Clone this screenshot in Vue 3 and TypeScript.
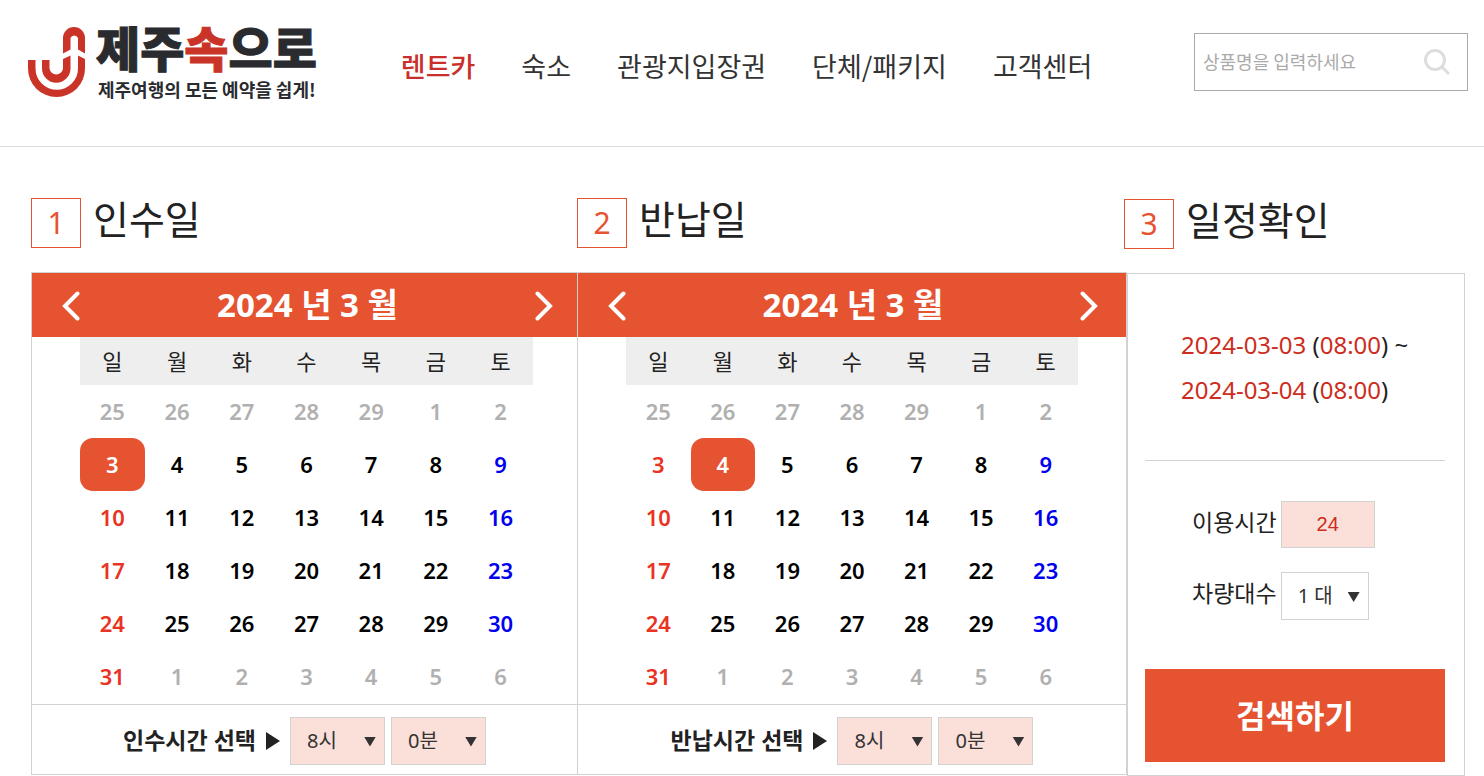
<script setup lang="ts">
import { ref } from 'vue'

interface Day {
  day: number
  closed: boolean
}

interface Calendar {
  step: number
  title: string
  timeLabel: string
  selected: number
}

const menu: string[] = ['렌트카', '숙소', '관광지입장권', '단체/패키지', '고객센터']
const weekdays: string[] = ['일', '월', '화', '수', '목', '금', '토']

const calendars = ref<Calendar[]>([
  { step: 1, title: '인수일', timeLabel: '인수시간 선택', selected: 3 },
  { step: 2, title: '반납일', timeLabel: '반납시간 선택', selected: 4 },
])

const hours = Array.from({ length: 13 }, (_, i) => i + 8)
const minutes = [0, 10, 20, 30, 40, 50]
const keyword = ref('')

// Days of neighbouring months and days before `firstOpen` cannot be booked.
function buildWeeks(year: number, month: number, firstOpen: number): Day[][] {
  const first = new Date(year, month - 1, 1)
  return Array.from({ length: 6 }, (_, week) =>
    Array.from({ length: 7 }, (_, weekday) => {
      const date = new Date(year, month - 1, 1 - first.getDay() + week * 7 + weekday)
      const day = date.getDate()
      return { day, closed: date.getMonth() !== month - 1 || day < firstOpen }
    }),
  )
}

const weeks = buildWeeks(2024, 3, 3)

function pick(calendar: Calendar, cell: Day) {
  if (!cell.closed) calendar.selected = cell.day
}
</script>

<template>
  <div class="page">
    <header class="header">
      <a class="logo" href="#">
        <svg class="mark" viewBox="28 27 57 70" aria-hidden="true">
          <path d="M63 53.5V38a11 11 0 0 1 22 0v15.500l-7-4V38a4 4 0 0 0-7.500 0v11.500z" />
          <path d="M28 60h7.500v8.500a21 21 0 0 0 42.500 0V55.500l7 3.500v9.500a28.500 28.500 0 0 1-57 0z" />
          <path d="M42 60h7.500v8.500a6.800 6.800 0 0 0 13.500 0V59l7.500-3.500v13a14.200 14.200 0 0 1-28.500 0z" />
        </svg>
        <span class="brand">
          <strong class="name">제주<em>속</em>으로</strong>
          <span class="slogan">제주여행의 모든 예약을 쉽게!</span>
        </span>
      </a>
      <nav class="menu">
        <a v-for="(item, i) in menu" :key="item" href="#" :class="{ active: i === 0 }">{{ item }}</a>
      </nav>
      <form class="search" @submit.prevent>
        <input v-model="keyword" type="text" placeholder="상품명을 입력하세요" aria-label="상품명" />
        <button type="submit" aria-label="검색">
          <svg viewBox="0 0 26 26" aria-hidden="true">
            <circle cx="11" cy="11" r="9.500" />
            <path d="M17.500 17.500L25 25" />
          </svg>
        </button>
      </form>
    </header>

    <main class="steps">
      <section v-for="cal in calendars" :key="cal.step" class="step">
        <h2 class="heading"><span class="number">{{ cal.step }}</span>{{ cal.title }}</h2>
        <div class="calendar">
          <div class="month">
            <button type="button" aria-label="이전 달">
              <svg viewBox="0 0 18 30" aria-hidden="true"><path d="M15.500 2.500L3 15l12.500 12.500" /></svg>
            </button>
            <strong>2024 년 3 월</strong>
            <button type="button" aria-label="다음 달">
              <svg viewBox="0 0 18 30" aria-hidden="true"><path d="M2.500 2.500L15 15L2.500 27.500" /></svg>
            </button>
          </div>
          <div class="days">
            <table>
              <thead>
                <tr><th v-for="name in weekdays" :key="name" scope="col">{{ name }}</th></tr>
              </thead>
              <tbody>
                <tr v-for="(week, w) in weeks" :key="w">
                  <td v-for="(cell, d) in week" :key="d">
                    <button
                      type="button"
                      :class="{
                        sunday: d === 0,
                        saturday: d === 6,
                        closed: cell.closed,
                        selected: !cell.closed && cell.day === cal.selected,
                      }"
                      @click="pick(cal, cell)"
                    >{{ cell.day }}</button>
                  </td>
                </tr>
              </tbody>
            </table>
          </div>
          <div class="time">
            <label :for="'hour' + cal.step">{{ cal.timeLabel }}</label>
            <svg class="pointer" viewBox="0 0 14 18" aria-hidden="true"><path d="M0 0l14 9l-14 9z" /></svg>
            <span class="select">
              <select :id="'hour' + cal.step">
                <option v-for="h in hours" :key="h">{{ h }}시</option>
              </select>
            </span>
            <span class="select">
              <select aria-label="분">
                <option v-for="m in minutes" :key="m">{{ m }}분</option>
              </select>
            </span>
          </div>
        </div>
      </section>

      <section class="step summary-step">
        <h2 class="heading"><span class="number">3</span>일정확인</h2>
        <div class="summary">
          <p class="period">
            <span><b>2024-03-03</b> (<b>08:00</b>) ~</span>
            <span><b>2024-03-04</b> (<b>08:00</b>)</span>
          </p>
          <div class="field">
            <label for="usage">이용시간</label>
            <input id="usage" type="text" value="24" readonly />
          </div>
          <div class="field">
            <label for="cars">차량대수</label>
            <span class="select plain">
              <select id="cars">
                <option v-for="n in 5" :key="n">{{ n }} 대</option>
              </select>
            </span>
          </div>
          <button type="button" class="submit">검색하기</button>
        </div>
      </section>
    </main>
  </div>
</template>

<style>
body {
  margin: 0;
  background: #fff;
}
</style>

<style scoped>
.page {
  --accent: #e55330;
  --line: #d2d2d2;
  color: #222;
  font-family: "Noto Sans", "Noto Sans CJK KR", sans-serif;
  overflow-x: hidden;
}

*,
*::before,
*::after {
  box-sizing: border-box;
}

button,
input,
select {
  margin: 0;
  padding: 0;
  border: 0;
  border-radius: 0;
  background: none;
  color: inherit;
  font: inherit;
}

button {
  cursor: pointer;
}

a {
  color: inherit;
  text-decoration: none;
}

.header {
  display: flex;
  align-items: flex-start;
  padding: 0 16px 0 28px;
  height: 147px;
  border-bottom: 1px solid #ddd;
  font-family: "Noto Sans CJK KR", sans-serif;
}

.logo {
  display: flex;
  gap: 11px;
  padding-top: 27px;
}

.mark {
  width: 57px;
  height: 70px;
  fill: #c93328;
}

.brand {
  display: flex;
  flex-direction: column;
  color: #2a2b2f;
  white-space: nowrap;
}

.name {
  font-size: 48px;
  font-weight: 900;
  line-height: 38px;
  -webkit-text-stroke: 1px currentColor;
}

.name em {
  color: #c93328;
  font-style: normal;
}

.slogan {
  padding-left: 2px;
  font-size: 18px;
  font-weight: 700;
  line-height: 48px;
}

.menu {
  display: flex;
  gap: 46px;
  padding: 46px 0 0 84px;
  color: #333;
  font-size: 27px;
  line-height: 40px;
  white-space: nowrap;
}

.menu .active {
  color: #c9302c;
  font-weight: 500;
}

.search {
  display: flex;
  align-items: center;
  width: 274px;
  height: 58px;
  margin: 33px 0 0 auto;
  padding: 0 17px 0 8px;
  border: 1px solid #aaa;
}

.search input {
  flex: 1;
  min-width: 0;
  padding-bottom: 2px;
  outline: 0;
  font-size: 18px;
  line-height: 54px;
}

.search input::placeholder {
  color: #aaa;
}

.search button {
  width: 26px;
  height: 26px;
}

.search svg {
  display: block;
  fill: none;
  stroke: #ddd;
  stroke-width: 3;
}

.steps {
  display: grid;
  grid-template-columns: 546fr 550fr 338fr;
  padding: 51px 19px 0 31px;
}

.heading {
  display: flex;
  gap: 12px;
  margin: 0 0 24px;
  font-size: 39px;
  font-weight: 400;
  line-height: 42px;
  white-space: nowrap;
}

.number {
  width: 50px;
  height: 50px;
  border: 1px solid var(--accent);
  color: var(--accent);
  font-size: 30px;
  line-height: 48px;
  text-align: center;
}

.calendar {
  border: 1px solid var(--line);
  border-right: 0;
}

.step:nth-child(2) .calendar {
  border-right: 1px solid var(--line);
}

.month {
  display: flex;
  align-items: center;
  justify-content: space-between;
  height: 64px;
  padding: 2px 24px 0 30px;
  background: var(--accent);
  color: #fff;
}

.step:nth-child(2) .month {
  padding-right: 28px;
}

.month strong {
  padding-bottom: 2px;
  font-size: 33px;
  line-height: 60px;
}

.month button {
  width: 18px;
  height: 30px;
}

.month svg {
  display: block;
  fill: none;
  stroke: #fff;
  stroke-width: 4;
  stroke-linecap: round;
}

.days {
  padding: 0 44px 0 48px;
  border-bottom: 1px solid var(--line);
}

.step:nth-child(2) .days {
  padding-right: 48px;
}

table {
  width: 100%;
  height: 367px;
  border-collapse: collapse;
  table-layout: fixed;
}

th,
td {
  padding: 0;
}

th {
  height: 48px;
  background: #eee;
  font-size: 22px;
  font-weight: 400;
  line-height: 48px;
}

td button {
  display: block;
  width: 100%;
  height: 53px;
  padding-bottom: 2px;
  border-radius: 13px;
  color: #000;
  font-size: 22px;
  font-weight: 600;
}

td .sunday {
  color: #e93323;
}

td .saturday {
  color: #00e;
}

td .closed {
  color: #b0b0b0;
}

td .selected {
  background: var(--accent);
  color: #fff;
}

.time {
  display: flex;
  align-items: center;
  justify-content: center;
  height: 69px;
  padding-top: 2px;
}

.time label {
  padding-bottom: 4px;
  font-size: 23px;
  font-weight: 700;
}

.pointer {
  width: 14px;
  height: 18px;
  margin: 0 10px;
  fill: #222;
}

.select {
  position: relative;
}

.select + .select {
  margin-left: 6px;
}

.select::after {
  position: absolute;
  top: 20px;
  right: 9px;
  width: 12px;
  height: 10px;
  background: #333;
  clip-path: polygon(0 0, 100% 0, 50% 100%);
  content: "";
  pointer-events: none;
}

select {
  appearance: none;
  display: block;
  width: 95px;
  height: 48px;
  padding-left: 16px;
  border: 1px solid var(--line);
  background: #fbdfd9;
  color: #333;
  font-size: 20px;
}

.plain select {
  width: 88px;
  background: #fff;
}

.summary-step {
  display: flex;
  flex-direction: column;
  padding-top: 1px;
}

.summary-step .heading {
  margin-left: -3px;
}

.summary {
  flex: 1;
  padding: 48px 19px 13px 17px;
  border: 1px solid var(--line);
}

.period {
  display: flex;
  flex-direction: column;
  height: 139px;
  margin: 0 0 40px;
  padding-left: 36px;
  border-bottom: 1px solid var(--line);
  font-size: 24px;
  line-height: 45px;
  white-space: nowrap;
}

.period b {
  color: #cc2d20;
  font-weight: 400;
}

.field {
  display: flex;
  gap: 4px;
  margin-bottom: 24px;
  padding-left: 47px;
  font-size: 23px;
  line-height: 42px;
  white-space: nowrap;
}

.field input {
  width: 94px;
  height: 47px;
  border: 1px solid var(--line);
  background: #fbdfd9;
  color: #cc2d20;
  font-family: "Liberation Sans", Arial, sans-serif;
  font-size: 20px;
  text-align: center;
}

.submit {
  display: block;
  width: 100%;
  height: 93px;
  margin-top: 49px;
  padding-bottom: 4px;
  background: var(--accent);
  color: #fff;
  font-size: 32px;
  font-weight: 700;
}
</style>
